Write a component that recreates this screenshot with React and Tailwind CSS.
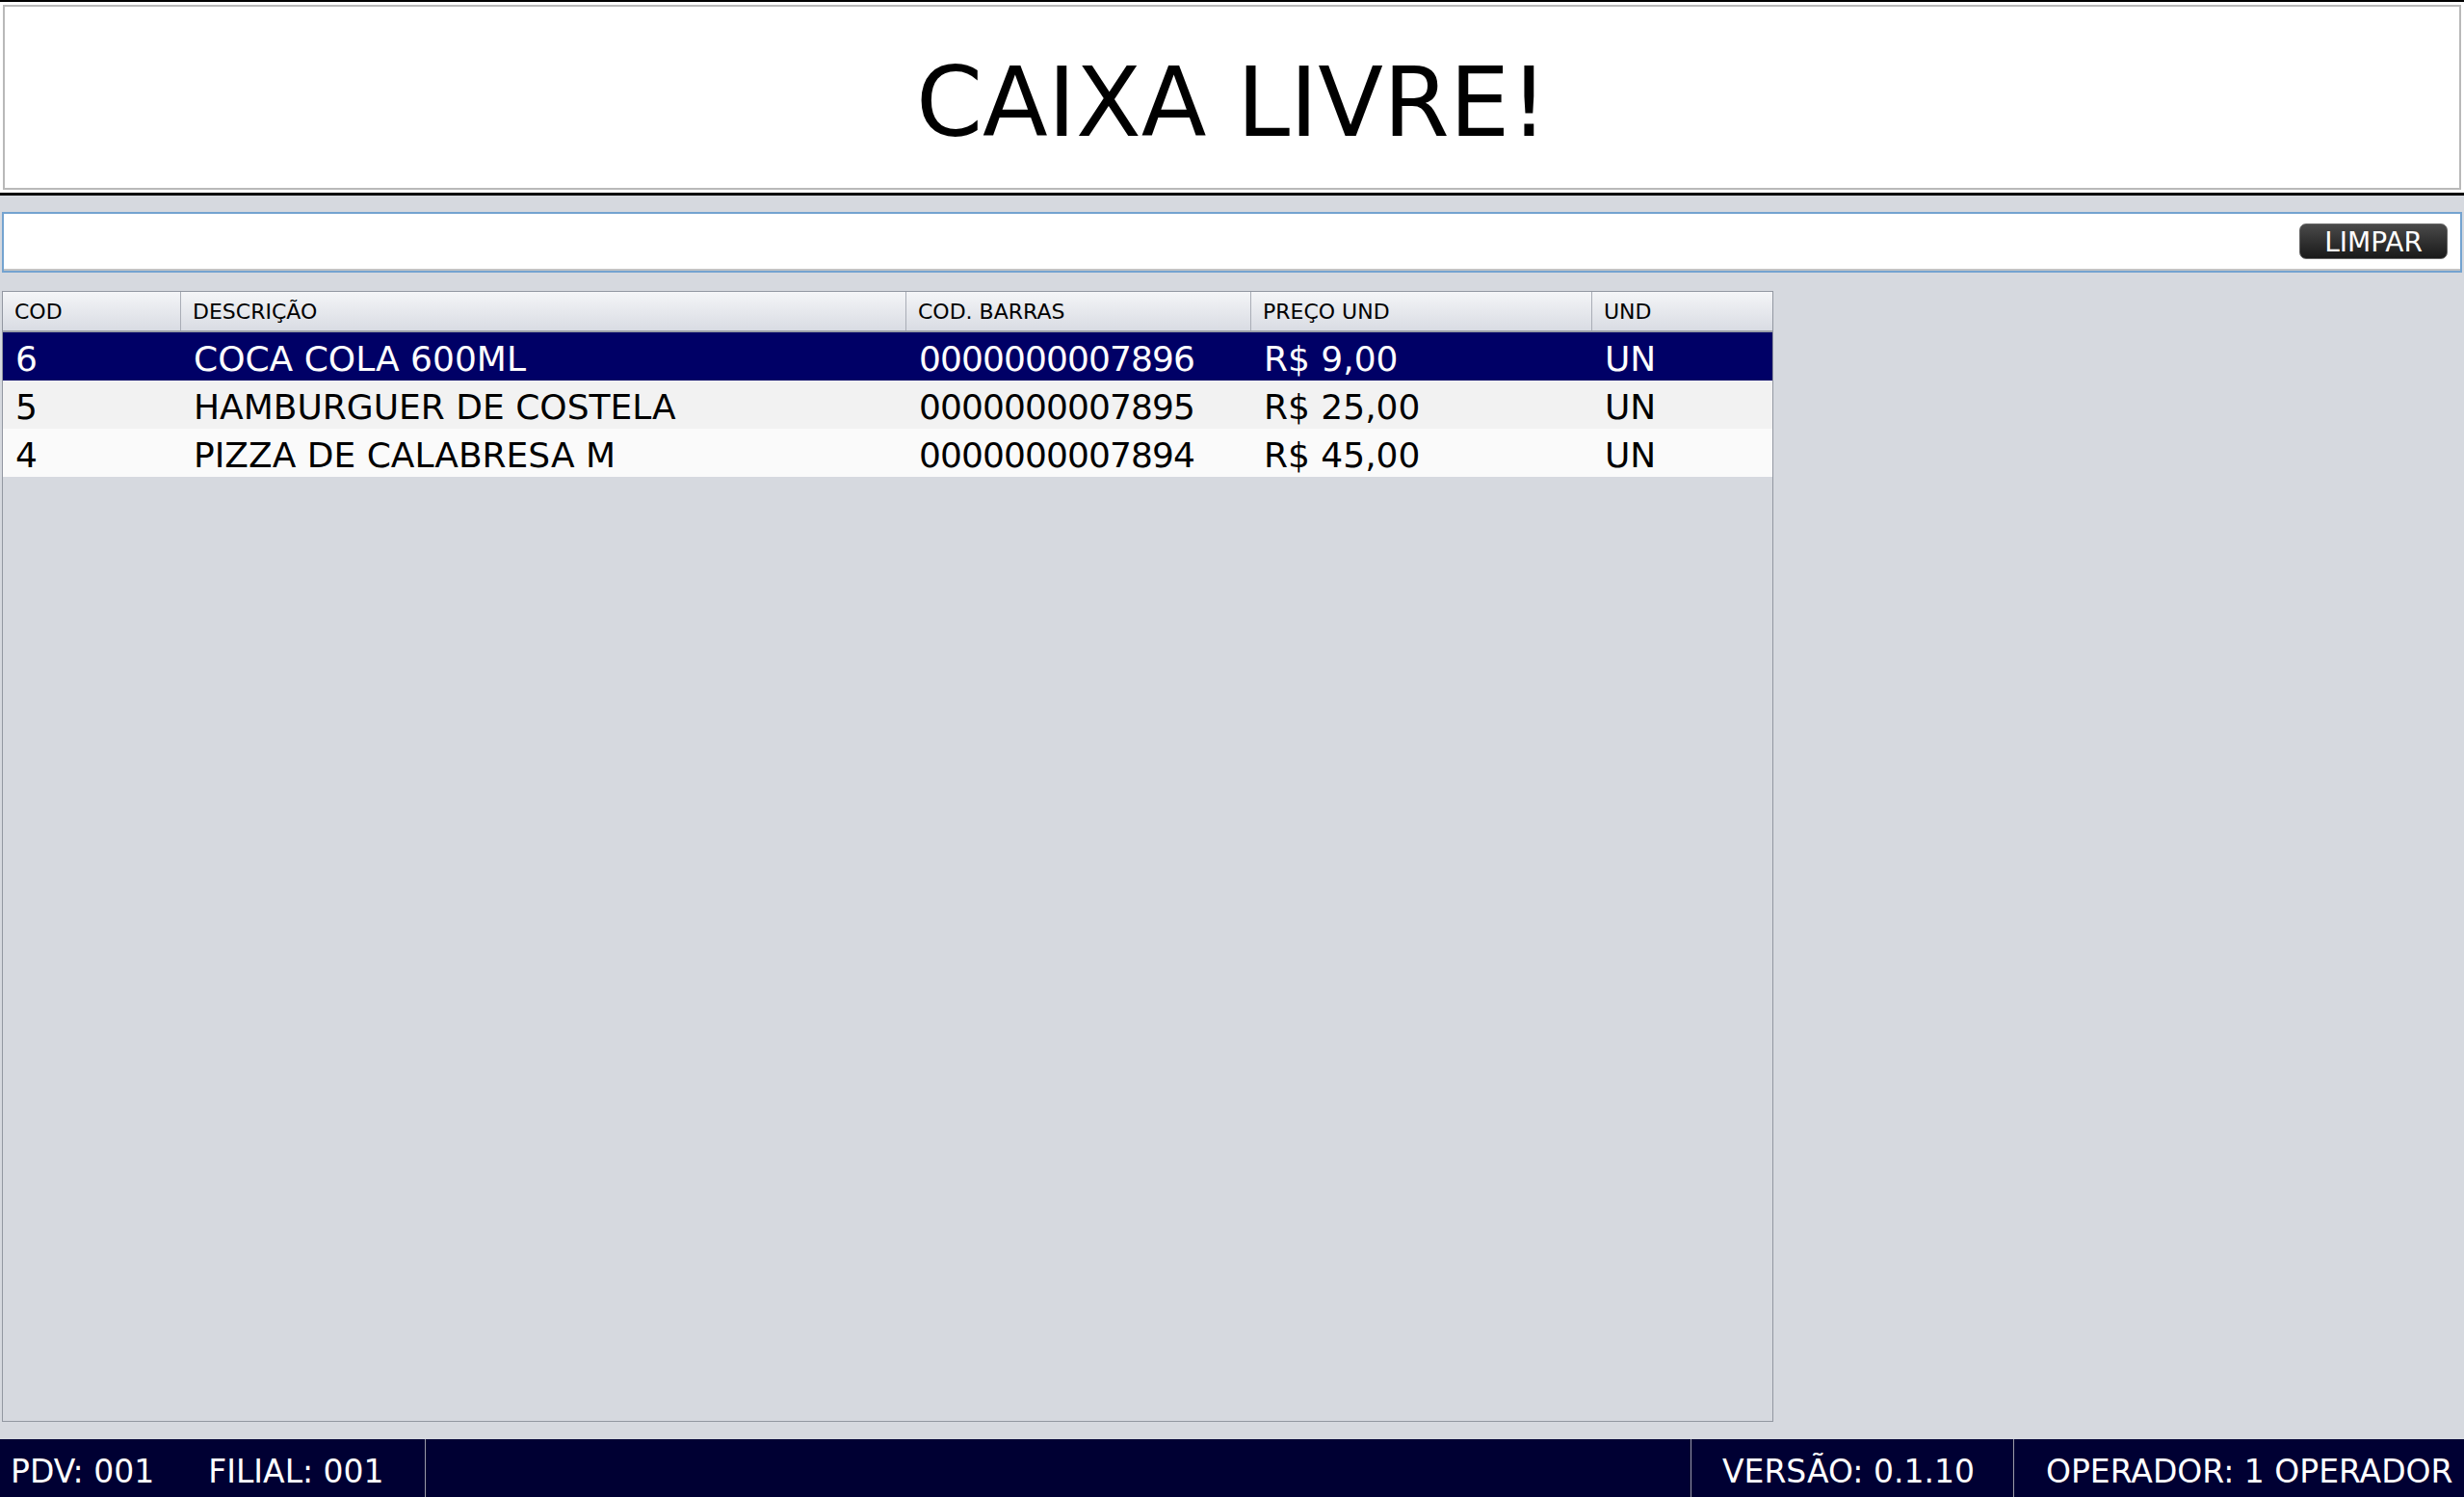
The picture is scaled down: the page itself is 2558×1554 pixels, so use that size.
import React from "react";

const rows = [
  { cod: "6", desc: "COCA COLA 600ML", barras: "0000000007896", preco: "R$ 9,00", und: "UN" },
  { cod: "5", desc: "HAMBURGUER DE COSTELA", barras: "0000000007895", preco: "R$ 25,00", und: "UN" },
  { cod: "4", desc: "PIZZA DE CALABRESA M", barras: "0000000007894", preco: "R$ 45,00", und: "UN" },
];

const columns = ["COD", "DESCRIÇÃO", "COD. BARRAS", "PREÇO UND", "UND"];

const App = () => {
  return (
    <div className="h-screen w-full overflow-hidden bg-[#d6d9df] flex flex-col font-['DejaVu_Sans','Verdana',sans-serif] text-black">
      {/* Status do caixa */}
      <div className="h-[203px] shrink-0 bg-white border-t-2 border-b-[3px] border-black px-[3px] pt-[3px] pb-[3px]">
        <div className="h-full border-2 border-[#b9b9b9] flex items-center justify-center pt-[10px]">
          <span className="text-[99px] leading-none">CAIXA LIVRE!</span>
        </div>
      </div>

      {/* Campo de busca */}
      <div className="mt-[17px] h-[63px] shrink-0 mx-[2px] border-2 border-[#74a3d0] bg-white">
        <div className="h-full border-b-2 border-[#c4c4c4] flex items-center justify-end pr-[13px]">
          <button className="h-[37px] w-[154px] rounded-[7px] border border-[#666] bg-gradient-to-b from-[#4a4a4a] to-[#1a1a1a] text-white text-[28px] leading-none flex items-center justify-center pt-[2px]">
            LIMPAR
          </button>
        </div>
      </div>

      {/* Tabela de produtos */}
      <div className="mt-[19px] mb-[18px] ml-[2px] w-[1839px] flex-1 border border-[#9297a1] bg-[#d6d9df]">
        <div className="grid grid-cols-[185px_753px_358px_354px_1fr] h-[42px] border-b-2 border-[#9a9ea8] bg-gradient-to-b from-[#f4f5f7] to-[#d9dce3]">
          {columns.map((c, i) => (
            <div
              key={c}
              className={`flex items-center pl-[12px] pt-[2px] text-[22px] leading-none ${
                i < columns.length - 1 ? "border-r border-[#a9adb6]" : ""
              }`}
            >
              {c}
            </div>
          ))}
        </div>
        {rows.map((r, idx) => (
          <div
            key={r.cod}
            className={`grid grid-cols-[185px_753px_358px_354px_1fr] h-[50px] items-center pt-[5px] text-[36px] leading-none ${
              idx === 0 ? "bg-[#000066] text-white" : idx === 1 ? "bg-[#f2f2f2]" : "bg-[#fafafa]"
            }`}
          >
            <div className="pl-[13px]">{r.cod}</div>
            <div className="pl-[13px]">{r.desc}</div>
            <div className="pl-[13px] tracking-[-0.9px]">{r.barras}</div>
            <div className="pl-[13px]">{r.preco}</div>
            <div className="pl-[13px]">{r.und}</div>
          </div>
        ))}
      </div>

      {/* Rodapé */}
      <div className="h-[60px] shrink-0 bg-[#000033] text-white text-[33px] leading-none flex">
        <div className="w-[442px] border-r border-[#9a9aa8] flex items-center pl-[11px] pt-[6px] gap-[56px]">
          <span>PDV: 001</span>
          <span>FILIAL: 001</span>
        </div>
        <div className="flex-1" />
        <div className="w-[335px] border-l border-[#9a9aa8] flex items-center pl-[32px] pt-[6px]">
          VERSÃO: 0.1.10
        </div>
        <div className="w-[468px] border-l border-[#9a9aa8] flex items-center pl-[33px] pt-[6px]">
          OPERADOR: 1 OPERADOR
        </div>
      </div>
    </div>
  );
};

export default App;
